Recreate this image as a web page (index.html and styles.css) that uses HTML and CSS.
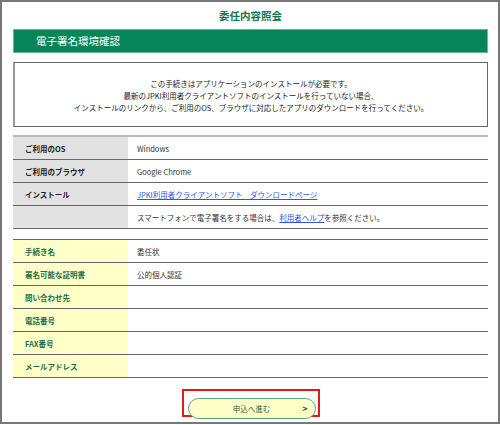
FILE: index.html
```html
<!DOCTYPE html>
<html lang="ja">
<head>
    <meta charset="UTF-8">
    <title>委任内容照会</title>
    <link rel="stylesheet" href="styles.css">
</head>
<body>
    <div class="frame">
        <h1 class="page-title">委任内容照会</h1>
        <h2 class="section-bar">電子署名環境確認</h2>

        <div class="notice">
            この手続きはアプリケーションのインストールが必要です。<br>
            最新のJPKI利用者クライアントソフトのインストールを行っていない場合、<br>
            インストールのリンクから、ご利用のOS、ブラウザに対応したアプリのダウンロードを行ってください。
        </div>

        <table class="info env">
            <tr>
                <th>ご利用のOS</th>
                <td>Windows</td>
            </tr>
            <tr>
                <th>ご利用のブラウザ</th>
                <td>Google Chrome</td>
            </tr>
            <tr>
                <th>インストール</th>
                <td><a href="#">JPKI利用者クライアントソフト　ダウンロードページ</a></td>
            </tr>
            <tr>
                <th></th>
                <td>スマートフォンで電子署名をする場合は、<a href="#">利用者ヘルプ</a>を参照ください。</td>
            </tr>
        </table>

        <table class="info proc">
            <tr>
                <th>手続き名</th>
                <td>委任状</td>
            </tr>
            <tr>
                <th>署名可能な証明書</th>
                <td>公的個人認証</td>
            </tr>
            <tr>
                <th>問い合わせ先</th>
                <td></td>
            </tr>
            <tr>
                <th>電話番号</th>
                <td></td>
            </tr>
            <tr>
                <th>FAX番号</th>
                <td></td>
            </tr>
            <tr>
                <th>メールアドレス</th>
                <td></td>
            </tr>
        </table>

        <div class="actions">
            <div class="highlight">
                <button class="next-btn">申込へ進む<span class="arrow">&gt;</span></button>
            </div>
        </div>
    </div>
</body>
</html>
```

FILE: styles.css
```css
body {
    margin: 0;
    font-family: "Noto Sans CJK JP", "Noto Sans", sans-serif;
    color: #333;
    background: #fff;
}
.frame {
    width: 500px;
    height: 424px;
    box-sizing: border-box;
    border: 2px solid #777;
    padding: 0 10px 0 11px;
}
.page-title {
    margin: 0;
    height: 27px;
    font-size: 10.5px;
    line-height: 27px;
    text-align: center;
    color: #12774c;
    font-weight: bold;
}
.section-bar {
    margin: 0;
    height: 24px;
    box-sizing: border-box;
    background-color: #05855a;
    border: 1px solid #6cb896;
    color: #fff;
    font-size: 10.5px;
    font-weight: normal;
    line-height: 22px;
    padding-left: 22px;
}
.notice {
    margin-top: 9px;
    height: 65px;
    box-sizing: border-box;
    border: 1px solid #666;
    border-left: 2px solid #999;
    padding-top: 15px;
    font-size: 7.5px;
    line-height: 12px;
    text-align: center;
    color: #222;
}
.info {
    width: 100%;
    border-collapse: collapse;
    font-size: 7.5px;
}
.info th,
.info td {
    height: 22px;
    padding: 0;
    border-bottom: 1px solid #666;
    text-align: left;
}
.info th {
    width: 115px;
    padding-left: 12px;
    box-sizing: border-box;
    font-weight: bold;
}
.info td {
    padding-left: 9px;
    color: #333;
}
.info a {
    color: #3355dd;
}
.env {
    margin-top: 8px;
    border-top: 2px solid #bbb;
}
.env th {
    background-color: #e2e2e2;
    color: #222;
}
.proc {
    margin-top: 10px;
    border-top: 1px solid #666;
}
.proc th {
    background-color: #ffffc8;
    color: #1b6e48;
}
.actions {
    display: flex;
    justify-content: center;
    margin-top: 11px;
}
.highlight {
    width: 138px;
    height: 28px;
    box-sizing: border-box;
    border: 2px solid #e61919;
    padding: 2px 2px 0 4px;
}
.next-btn {
    position: relative;
    width: 128px;
    height: 21px;
    box-sizing: border-box;
    border: 1px solid #5aa67e;
    border-radius: 11px;
    background-color: #ffffc8;
    color: #2e5e46;
    font-family: inherit;
    font-size: 7.5px;
    line-height: 19px;
    padding: 0;
    cursor: pointer;
}
.arrow {
    position: absolute;
    right: 7px;
    top: 0;
    font-size: 9px;
    font-weight: bold;
    color: #2e5e46;
}
```
